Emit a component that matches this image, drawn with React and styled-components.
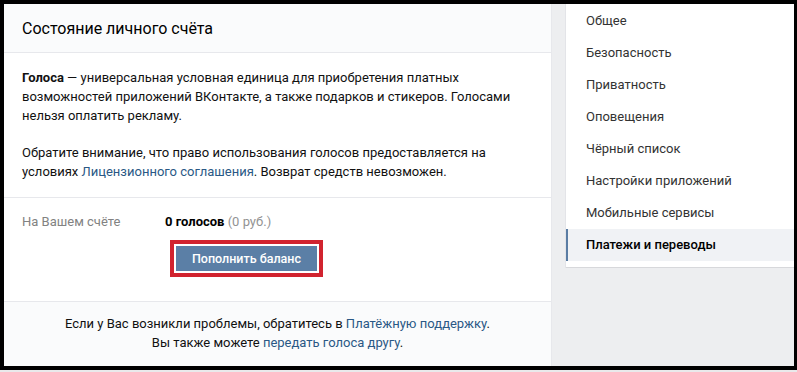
import React from 'react'
import styled, { createGlobalStyle } from 'styled-components'

const GlobalStyle = createGlobalStyle`
  html, body {
    margin: 0;
    padding: 0;
    background: #000;
  }
  body {
    font-family: Roboto, "Open Sans", "Liberation Sans", sans-serif;
    font-size: 13px;
    color: #000;
    -webkit-font-smoothing: antialiased;
  }
`

const Screen = styled.div`
  width: 797px;
  height: 372px;
  background: #000;
  padding: 4px 0 0 4px;
  box-sizing: border-box;
`

const Viewport = styled.div`
  width: 790px;
  height: 362px;
  overflow: hidden;
  background: #edeef0;
  display: flex;
  align-items: flex-start;
`

const BottomStrip = styled.div`
  height: 2px;
  margin: 4px 0 0 -4px;
  background: #e9e9eb;
`

const Panel = styled.div`
  width: 547px;
  height: 100%;
  background: #fff;
  border-right: 1px solid #e7e8ec;
  display: flex;
  flex-direction: column;
`

const Header = styled.div`
  height: 48px;
  flex-shrink: 0;
  padding: 0 18px;
  display: flex;
  align-items: center;
  background: #fafbfc;
  border-bottom: 1px solid #e7e8ec;
  font-size: 16px;
  color: #000;
`

const Section = styled.div`
  padding: ${p => p.$pad};
  border-bottom: 1px solid #e7e8ec;
  flex-shrink: 0;
`

const Paragraph = styled.p`
  margin: 0 0 18px;
  line-height: 19px;
  color: #111;
  &:last-child {
    margin-bottom: 0;
  }
`

const Link = styled.a`
  color: #2a5885;
  text-decoration: none;
`

const BalanceRow = styled.div`
  display: grid;
  grid-template-columns: 143px 1fr;
  line-height: 19px;
`

const Label = styled.div`
  color: #828282;
`

const Amount = styled.div`
  b {
    font-weight: 700;
    color: #000;
  }
  span {
    color: #939393;
  }
`

const Marker = styled.div`
  margin: 9px 0 0 148px;
  width: 153px;
  height: 37px;
  box-sizing: border-box;
  border: 4px solid #d1232f;
  padding: 2px;
  background: #fff;
`

const Button = styled.button`
  width: 100%;
  height: 100%;
  border: 0;
  margin: 0;
  padding: 0;
  background: #5b7fa6;
  color: #fff;
  font-family: inherit;
  font-size: 12.5px;
  font-weight: 500;
  cursor: pointer;
`

const Footer = styled.div`
  flex: 1;
  background: #fafbfc;
  padding-top: 13px;
  text-align: center;
  line-height: 18.5px;
  color: #111;
`

const Menu = styled.div`
  margin-left: 14px;
  width: 228px;
  padding: 1px 0 6px;
  background: #fff;
  box-shadow: 0 1px 0 0 #d7d8db, 0 0 0 1px #e3e4e8;
`

const MenuItem = styled.div`
  height: 32px;
  line-height: 32px;
  padding-left: 18px;
  border-left: 2px solid ${p => (p.$active ? '#5a7ca3' : 'transparent')};
  background: ${p => (p.$active ? '#f0f2f5' : 'transparent')};
  color: ${p => (p.$active ? '#000' : '#333')};
  font-weight: ${p => (p.$active ? 500 : 400)};
`

const menu = [
  'Общее',
  'Безопасность',
  'Приватность',
  'Оповещения',
  'Чёрный список',
  'Настройки приложений',
  'Мобильные сервисы',
  'Платежи и переводы',
]

export default function App() {
  return (
    <Screen>
      <GlobalStyle />
      <Viewport>
        <Panel>
          <Header>Состояние личного счёта</Header>
          <Section $pad="15px 18px 16px">
            <Paragraph>
              <b>Голоса</b> — универсальная условная единица для приобретения платных
              возможностей приложений ВКонтакте, а также подарков и стикеров. Голосами
              нельзя оплатить рекламу.
            </Paragraph>
            <Paragraph>
              Обратите внимание, что право использования голосов предоставляется на
              условиях <Link>Лицензионного соглашения</Link>. Возврат средств невозможен.
            </Paragraph>
          </Section>
          <Section $pad="14px 18px 24px">
            <BalanceRow>
              <Label>На Вашем счёте</Label>
              <Amount>
                <b>0 голосов</b> <span>(0 руб.)</span>
              </Amount>
            </BalanceRow>
            <Marker>
              <Button>Пополнить баланс</Button>
            </Marker>
          </Section>
          <Footer>
            Если у Вас возникли проблемы, обратитесь в <Link>Платёжную поддержку</Link>.
            <br />
            Вы также можете <Link>передать голоса другу</Link>.
          </Footer>
        </Panel>
        <Menu>
          {menu.map((item, i) => (
            <MenuItem key={item} $active={i === menu.length - 1}>
              {item}
            </MenuItem>
          ))}
        </Menu>
      </Viewport>
      <BottomStrip />
    </Screen>
  )
}
